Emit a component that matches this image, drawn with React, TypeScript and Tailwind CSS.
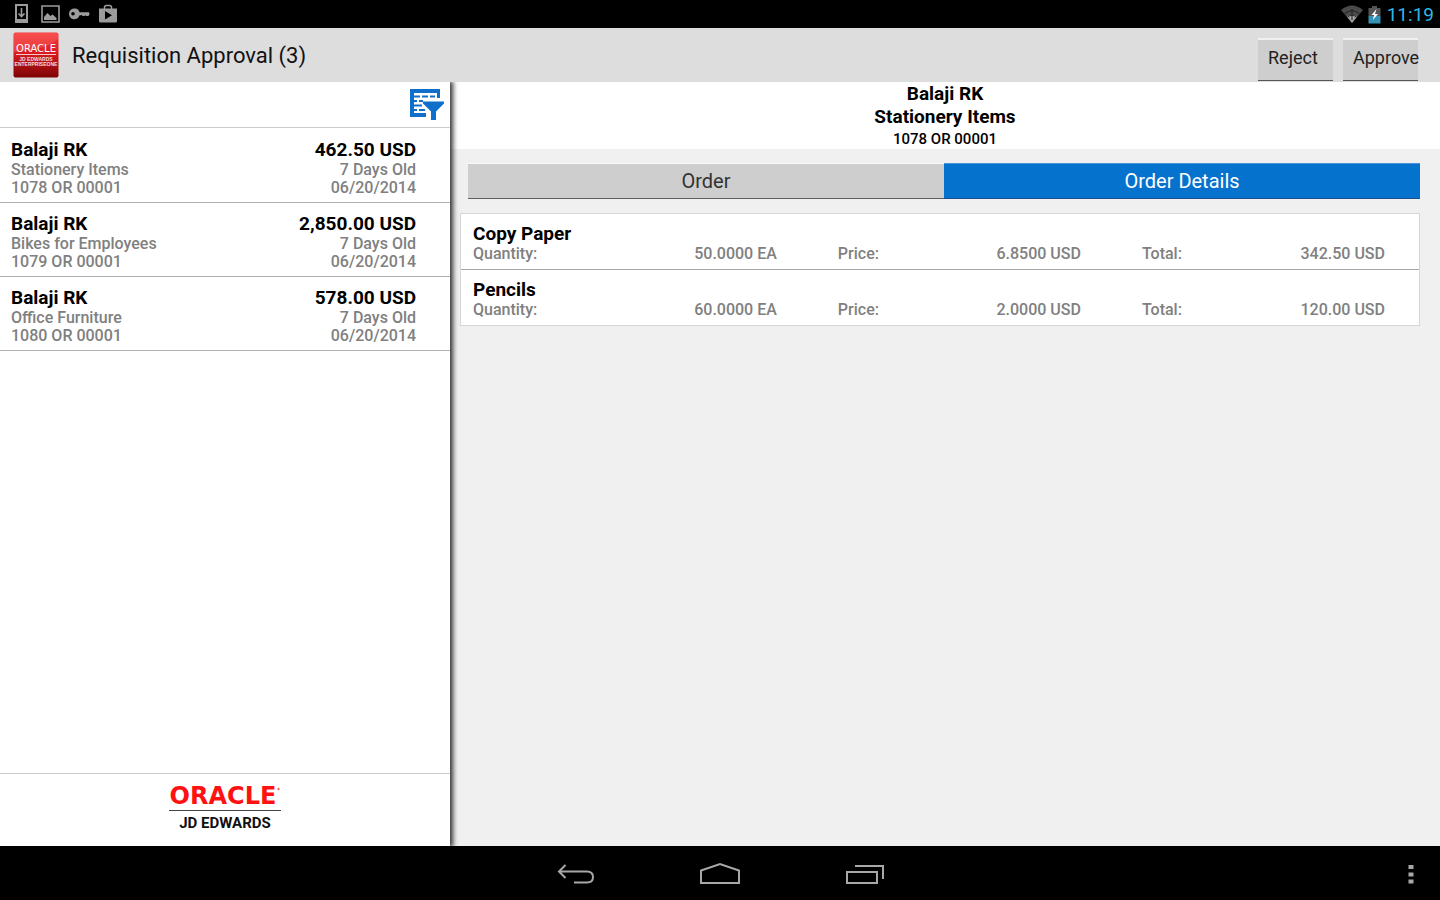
import React from "react";

type Requisition = {
  name: string;
  description: string;
  order: string;
  amount: string;
  age: string;
  date: string;
};

type OrderLine = {
  item: string;
  fields: { label: string; value: string }[];
};

const requisitions: Requisition[] = [
  { name: "Balaji RK", description: "Stationery Items", order: "1078 OR 00001", amount: "462.50 USD", age: "7 Days Old", date: "06/20/2014" },
  { name: "Balaji RK", description: "Bikes for Employees", order: "1079 OR 00001", amount: "2,850.00 USD", age: "7 Days Old", date: "06/20/2014" },
  { name: "Balaji RK", description: "Office Furniture", order: "1080 OR 00001", amount: "578.00 USD", age: "7 Days Old", date: "06/20/2014" },
];

const orderLines: OrderLine[] = [
  {
    item: "Copy Paper",
    fields: [
      { label: "Quantity:", value: "50.0000 EA" },
      { label: "Price:", value: "6.8500 USD" },
      { label: "Total:", value: "342.50 USD" },
    ],
  },
  {
    item: "Pencils",
    fields: [
      { label: "Quantity:", value: "60.0000 EA" },
      { label: "Price:", value: "2.0000 USD" },
      { label: "Total:", value: "120.00 USD" },
    ],
  },
];

function StatusBar() {
  return (
    <div className="flex h-7 shrink-0 items-center justify-between bg-black pr-[6px] pl-3">
      <div className="flex items-center gap-2 text-[#9c9c9c]">
        <svg width="20" height="20" viewBox="0 0 20 20" fill="none" stroke="currentColor" aria-hidden="true">
          <path d="M4 1h11v17H4z" strokeWidth="2" />
          <path d="M4 16.5h11" strokeWidth="3" />
          <path d="M9.500 4v8M6.500 9.500l3 3 3-3" strokeWidth="1.600" />
        </svg>
        <svg width="20" height="20" viewBox="0 0 20 20" aria-hidden="true">
          <path d="M2 2h17v16H2z" fill="none" stroke="currentColor" strokeWidth="1.600" />
          <path d="M4 16v-3l3.500-4 3 3 2-1.500 4 3.500v2z" fill="currentColor" />
        </svg>
        <svg width="22" height="20" viewBox="0 0 22 20" fill="currentColor" aria-hidden="true">
          <path
            fillRule="evenodd"
            d="M7 4.500a5.200 5.200 0 0 1 4.600 3.700H21l.6 1.800-1.100 2h-2.200l-.8-.8-.9.800h-1.800l-.8-.8h-2.400A5.400 5.400 0 1 1 7 4.500zM5 8a1.800 1.800 0 1 0 0 3.600A1.800 1.800 0 0 0 5 8z"
          />
        </svg>
        <svg width="20" height="20" viewBox="0 0 20 20" aria-hidden="true">
          <path d="M6.500 5V3.500Q6.500 1.500 8.500 1.500h3q2 0 2 2V5" fill="none" stroke="currentColor" strokeWidth="1.500" />
          <path fillRule="evenodd" d="M1 4.500h18V17q0 1.500-1.500 1.500h-15Q1 18.500 1 17zM7 7v8.500l7-4.200z" fill="currentColor" />
        </svg>
      </div>
      <div className="flex items-center gap-1">
        <svg width="24" height="20" viewBox="0 0 24 20" aria-hidden="true">
          <path d="M1 6Q12-3 23 6L12 19z" fill="#4a4a4a" />
          <path d="M7 12.500Q12 9 17 12.500L12 19z" fill="#a0a0a0" />
          <path d="M4.500 9.500Q12 4 19.500 9.500M7.500 13Q12 9.500 16.500 13" fill="none" stroke="#222" strokeWidth="1" />
          <path d="M12 5v11" stroke="#222" strokeWidth="1" />
        </svg>
        <svg width="13" height="19" viewBox="0 0 13 19" aria-hidden="true">
          <path d="M4 1h5v2h3.500v8H.5V3H4z" fill="#555" />
          <path d="M.5 11h12v7.500H.5z" fill="#3492b5" />
          <path d="M8.500 4L3.500 10h2.700l-1.400 5L10 9H7z" fill="#fff" />
        </svg>
        <time className="ml-[2px] pt-px text-[19px] leading-7 text-[#33b5e5]">11:19</time>
      </div>
    </div>
  );
}

function AppIcon() {
  return (
    <svg width="46" height="46" viewBox="0 0 46 46" role="img" aria-label="Oracle JD Edwards EnterpriseOne" className="shrink-0">
      <defs>
        <linearGradient id="app-red" x1="0" y1="0" x2="0" y2="1">
          <stop offset="0" stopColor="#f5393b" />
          <stop offset="0.45" stopColor="#d91d20" />
          <stop offset="1" stopColor="#7d0305" />
        </linearGradient>
      </defs>
      <rect x="0.500" y="0.500" width="45" height="45" rx="2" fill="url(#app-red)" />
      <path d="M1 1h44v6Q33 18 1 20z" fill="#ff7470" opacity="0.35" />
      <text x="23" y="20" textAnchor="middle" fontFamily="DejaVu Sans" fontSize="10" fill="#fff">ORACLE</text>
      <path d="M3 22.500h40" stroke="#f4c8c8" strokeWidth="1" />
      <text x="23" y="29" textAnchor="middle" fontFamily="Liberation Sans" fontSize="5" fontWeight="700" fill="#f7dada">JD EDWARDS</text>
      <text x="23" y="34" textAnchor="middle" fontFamily="Liberation Sans" fontSize="5" fontWeight="700" fill="#f7dada">ENTERPRISEONE</text>
    </svg>
  );
}

function ActionButton({ children }: { children: React.ReactNode }) {
  return (
    <button
      type="button"
      className="h-[43px] w-[75px] border-t-2 border-b border-t-[#f0f0f0] border-b-[#555] bg-[#cecece] pb-1 pl-[10px] text-left text-lg leading-9 whitespace-nowrap text-[#222]"
    >
      {children}
    </button>
  );
}

function ActionBar() {
  return (
    <header className="relative z-20 flex h-[54px] shrink-0 items-center justify-between bg-[#dddddd] pr-[22px] pl-[13px]">
      <div className="flex items-center gap-[13px]">
        <AppIcon />
        <h1 className="pt-[2px] text-[22px] leading-7 text-[#111]">Requisition Approval (3)</h1>
      </div>
      <div className="flex gap-[10px] self-end pb-px">
        <ActionButton>Reject</ActionButton>
        <ActionButton>Approve</ActionButton>
      </div>
    </header>
  );
}

function FilterIcon() {
  return (
    <svg width="34" height="32" viewBox="0 0 34 32" fill="#0f6fca" aria-hidden="true">
      <path d="M0 0h30v9h-3V4H4v20h12v4H0z" />
      <path d="M3 6.500h7v2H3zM12 6.500h6v2h-6zM20 6.500h5v2h-5zM3 11h4v2H3zM9 11h4v2H9zM3 15.500h9v2H3zM3 20h4v2H3zM9 20h6v2H9z" />
      <path d="M13 12.500h21v2L26 22.500V31h-5v-8.500L13 14.500z" />
    </svg>
  );
}

function Sidebar() {
  return (
    <aside className="z-10 flex w-[31.25%] shrink-0 flex-col bg-white shadow-[2px_0_5px_1px_rgba(0,0,0,0.8)]">
      <div className="flex h-[46px] shrink-0 items-start justify-end border-b border-[#cccccc] pt-[7px] pr-[6px]">
        <button type="button" aria-label="Filter requisitions">
          <FilterIcon />
        </button>
      </div>
      <ul className="pt-px">
        {requisitions.map((r) => (
          <li key={r.order} className="border-b border-[#b0b0b0]">
            <a href={`#${r.order.slice(0, 4)}`} className="flex justify-between pt-[9px] pr-[34px] pb-[5px] pl-[11px] text-base leading-[18px] font-medium text-[#808080]">
              <div>
                <h2 className="text-[19px] leading-[23px] font-bold text-black">{r.name}</h2>
                <p>{r.description}</p>
                <p>{r.order}</p>
              </div>
              <div className="text-right">
                <p className="text-[19px] leading-[23px] font-bold text-black">{r.amount}</p>
                <p>{r.age}</p>
                <p>{r.date}</p>
              </div>
            </a>
          </li>
        ))}
      </ul>
      <footer className="mt-auto flex h-[73px] shrink-0 flex-col items-center border-t border-[#cccccc] pt-2">
        <div className="flex font-['DejaVu_Sans',sans-serif] text-2xl leading-7 font-bold text-[#ff1111]">
          ORACLE
          <svg width="4" height="10" viewBox="0 0 4 10" fill="#ff6666" aria-hidden="true">
            <circle cx="2.500" cy="7" r="1.200" />
          </svg>
        </div>
        <div className="w-28 border-t border-[#444] pt-[3px] text-center text-[15px] leading-[18px] font-bold text-[#111]">JD EDWARDS</div>
      </footer>
    </aside>
  );
}

function Detail() {
  return (
    <main className="flex min-w-0 flex-1 flex-col">
      <div className="bg-white text-center font-bold text-black">
        <h2 className="text-[19px] leading-[23px]">Balaji RK</h2>
        <p className="text-[19px] leading-[23px]">Stationery Items</p>
        <p className="pt-px text-[15px] leading-5 font-medium">1078 OR 00001</p>
      </div>
      <div className="pt-[14px] pr-5 pl-[10px]">
        <div role="tablist" className="ml-2 grid grid-cols-2 text-xl">
          <button type="button" role="tab" aria-selected="false" className="h-9 border-t border-b border-t-[#f8f8f8] border-b-[#5f5f5f] bg-[#cecece] text-[#333]">
            Order
          </button>
          <button type="button" role="tab" aria-selected="true" className="h-9 border-t border-b border-t-[#4a92d6] border-b-[#1b4f8b] bg-[#0572ce] text-white">
            Order Details
          </button>
        </div>
        <ul className="mt-[14px] divide-y divide-[#a8a8a8] border border-[#d6d6d6] bg-white">
          {orderLines.map((line) => (
            <li key={line.item} className="pt-2 pr-[34px] pb-[6px] pl-3">
              <h3 className="text-[19px] leading-[23px] font-bold text-black">{line.item}</h3>
              <dl className="grid grid-cols-[5fr_4fr_4fr] gap-[61px] text-base leading-[18px] font-medium text-[#808080]">
                {line.fields.map((f) => (
                  <div key={f.label} className="flex justify-between">
                    <dt>{f.label}</dt>
                    <dd>{f.value}</dd>
                  </div>
                ))}
              </dl>
            </li>
          ))}
        </ul>
      </div>
    </main>
  );
}

function NavBar() {
  return (
    <nav className="grid h-[54px] shrink-0 grid-cols-[1fr_auto_1fr] items-center bg-black pt-[2px] text-[#a8a8a8]">
      <div className="col-start-2 flex items-center gap-[104px]">
        <button type="button" aria-label="Back">
          <svg width="40" height="24" viewBox="0 0 40 24" fill="none" stroke="currentColor" strokeWidth="2" aria-hidden="true">
            <path d="M10.500 3L4 9.500 10.500 16M4 9.500h28q6 0 6 5.500t-6 5.500H19" />
          </svg>
        </button>
        <button type="button" aria-label="Home">
          <svg width="42" height="24" viewBox="0 0 42 24" fill="none" stroke="currentColor" strokeWidth="2" aria-hidden="true">
            <path d="M2 21V8.500L21 2 40 8.500V21z" />
          </svg>
        </button>
        <button type="button" aria-label="Recent apps">
          <svg width="40" height="24" viewBox="0 0 40 24" fill="none" stroke="currentColor" strokeWidth="2" aria-hidden="true">
            <path d="M2 10h30v11H2zM10 4h28v13" />
          </svg>
        </button>
      </div>
      <button type="button" aria-label="More options" className="mr-[26px] justify-self-end">
        <svg width="6" height="22" viewBox="0 0 6 22" fill="currentColor" aria-hidden="true">
          <path d="M.5 2h5v4h-5zM.5 9.500h5v4h-5zM.5 16.500h5v4h-5z" />
        </svg>
      </button>
    </nav>
  );
}

export default function App() {
  return (
    <div className="flex min-h-screen flex-col bg-[#f0f0f0] font-['Roboto',sans-serif]">
      <StatusBar />
      <ActionBar />
      <div className="flex flex-1">
        <Sidebar />
        <Detail />
      </div>
      <NavBar />
    </div>
  );
}
